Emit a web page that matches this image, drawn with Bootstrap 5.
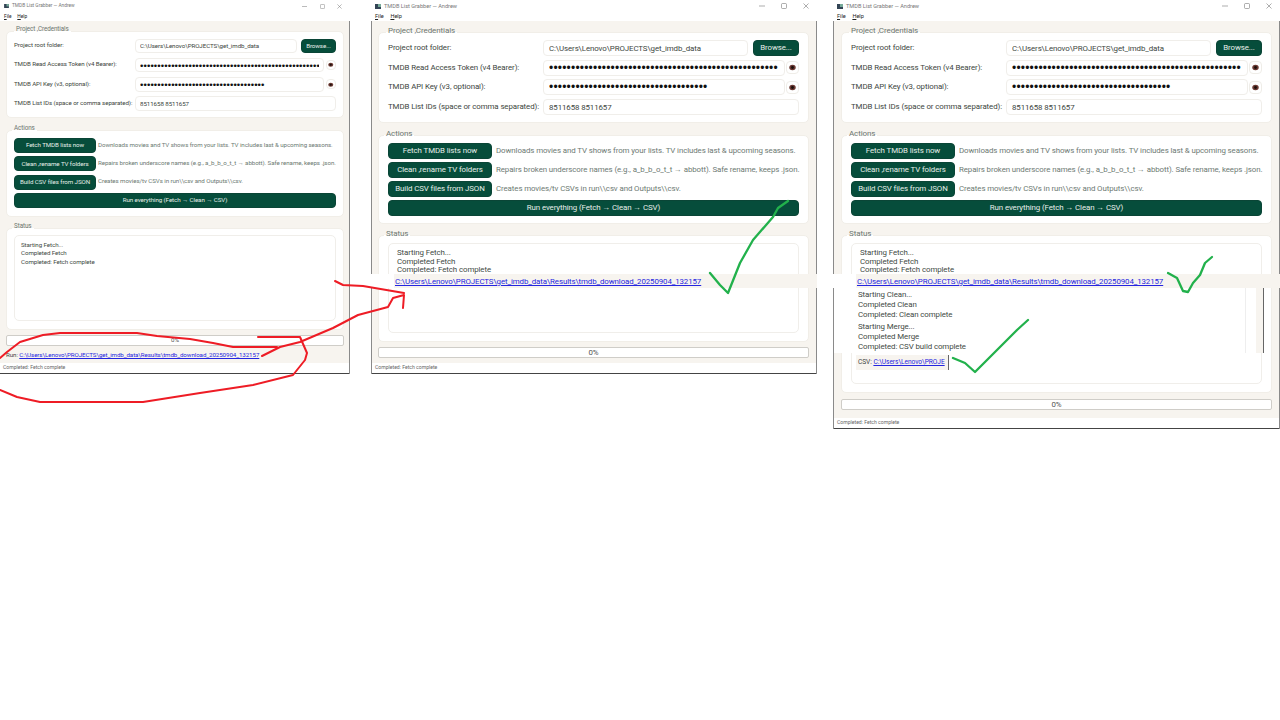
<!DOCTYPE html>
<html lang="en"><head><meta charset="utf-8"><title>TMDB List Grabber</title>
<link href="https://cdn.jsdelivr.net/npm/bootstrap@5.3.0/dist/css/bootstrap.min.css" rel="stylesheet">
<style>
html,body{margin:0;background:#fff;width:1280px;height:720px;overflow:hidden}
body{position:relative;font-family:Roboto,"Noto Sans",sans-serif;color:#3d4640}
.appwin{position:absolute;top:0;display:flex;flex-direction:column;background:#f7f4ef;box-shadow:inset -1px 0 #8a8a8a,inset 1px 0 #8a8a8a,inset 0 -1px #444}
.w1{left:0;width:350px;height:374px;box-shadow:inset -1px 0 #8a8a8a,inset 0 -1px #444;--fs:6.2px;--ls:-.08px;--lh:8.3px;--lab:121px;--ph:8px;--pv:7.5px;--rh:14.5px;--rg:4.8px;--brh:15px;--brg:3.3px;--bw:82px;--brw:35px;--bgap:4px;--ew:10px;--eg:2px;--ip:4px;--dot:9.6px;--dls:.1px;--tfs:4.8px;--cg:12.5px;--bl:6px;--br:6px;--lp:6px;--lg:2px;--esv:5.5px}
.w2{left:371px;width:446px;height:374px;--fs:7.9px;--ls:-.1px;--lh:8.6px;--lab:155px;--ph:10px;--pv:8px;--rh:16px;--rg:3.7px;--brh:16px;--brg:3px;--bw:104px;--brw:46px;--bgap:5px;--ew:13px;--eg:1px;--ip:5px;--dot:12px;--dls:.2px;--tfs:5.6px;--cg:16px;--bl:7px;--br:8px;--lp:8px;--lg:4px;--esv:7px}
.w3{left:833px;width:447px;height:429px;--fs:7.9px;--ls:-.1px;--lh:8.6px;--lab:155px;--ph:10px;--pv:8px;--rh:16px;--rg:3.7px;--brh:16px;--brg:3px;--bw:104px;--brw:46px;--bgap:5px;--ew:13px;--eg:1px;--ip:5px;--dot:12px;--dls:.2px;--tfs:5.6px;--cg:16px;--bl:8px;--br:8px;--lp:8px;--lg:4px;--esv:7px}
.ttl{height:12px;background:#fff;display:flex;align-items:center;padding:0 4px;font-size:var(--tfs);color:#777;gap:3px;flex:none}
.ttl-ctl{margin-left:auto;display:flex;gap:var(--cg);align-items:center;padding-right:4px}
.mbar{height:9px;background:#fff;display:flex;gap:calc(var(--tfs) + 1px);align-items:center;padding:0 4px;font-size:var(--tfs);color:#222;flex:none}
.mbar u{text-decoration-thickness:.5px}
.appbody{flex:1;display:flex;flex-direction:column;padding:0 var(--br) 0 var(--bl);font-size:var(--fs);letter-spacing:var(--ls);min-height:0}
.grp{background:#fff;border:1px solid #f1eee8;border-radius:5px;padding:calc(var(--pv) - 1px) calc(var(--ph) - 1px);position:relative}
.grp-t{position:absolute;left:5px;top:-7px;background:linear-gradient(#f7f4ef 70%,#fff 70%);padding:0 2px;line-height:9px;color:#6c7670;font-size:calc(var(--fs) + .1px)}
.g1 .grp-t{left:7px}
.g1{margin-top:11px}.g2{margin-top:12px}.g3{margin-top:11px;padding-bottom:8px}
.w1 .g1{margin-top:10px}.w1 .g2{margin-top:11.600px;padding-top:7px;padding-bottom:8px}.w1 .g3{padding-top:6px}
.frm{display:flex;flex-direction:column;gap:var(--rg)}
.frow{display:flex;align-items:center;height:var(--rh)}
.flab{width:var(--lab);flex:none;white-space:nowrap}
.fld{flex:1;min-width:0;width:auto;height:100%;min-height:0;padding:0 var(--ip);font-size:var(--fs);letter-spacing:var(--ls);line-height:1;color:#3d4640;background:#fff;border:1px solid #f0eeea;border-radius:4px;box-shadow:none}
.fld[type=password]{color:#111;letter-spacing:var(--dls);font-family:"Liberation Sans",sans-serif;font-size:var(--dot)}
.btn.bg{background:#064d3b;border:1px solid #0a4536;color:#e6eeea;border-radius:4px;font-size:var(--fs);letter-spacing:var(--ls);padding:0;height:var(--brh);line-height:1;display:flex;align-items:center;justify-content:center;white-space:nowrap}
.btn.bg.brw{width:var(--brw);margin-left:var(--bgap);flex:none;height:var(--rh)}
.eye{width:var(--ew);height:var(--ew);flex:none;margin-left:var(--eg);background:#fff;border:1px solid #efede8;border-radius:4px;display:flex;align-items:center;justify-content:center;padding:0}
.eye svg{width:var(--esv);height:var(--esv)}
.acts{display:flex;flex-direction:column;gap:var(--brg)}
.acts .bg.sm{width:var(--bw);flex:none}
.dsc{color:#6d7a73;white-space:nowrap;margin-left:var(--lg)}
.log{background:#fff;border:1px solid #f0eeea;border-radius:5px;padding:5.2px var(--lp);line-height:var(--lh);color:#414a44}
.w1 .log{height:86px}.w2 .log{height:90px}.w3 .log{height:141px}
.bar{height:11px;margin-top:5px;background:#fff;border:1px solid #cfcdc8;border-radius:2px;display:flex;align-items:center;justify-content:center;font-size:var(--fs);color:#555;flex:none}
.w3 .bar{margin-top:6px}
.runrow{margin-top:3px;line-height:12px;white-space:nowrap;color:#444}
a.lnk{color:#2525e0;text-decoration:underline}
.sbar{height:10px;flex:none;background:#fff;padding-left:3px;font-size:5.1px;line-height:9px;color:#666;margin:0 1px 1px}
.w1 .sbar{margin-left:0}
.strip{position:absolute;left:370px;width:910px;top:274px;height:14px;background:#fff}
.strip-in{position:absolute;top:0;height:14px;background:#f7f4ef;white-space:nowrap;font-size:7.9px;letter-spacing:-.1px;line-height:15px;padding-left:1px}
.s-a{left:24px;width:423px}
.s-b{left:486px;width:424px}
.patch{position:absolute;left:834px;top:288px;width:430px;height:65px;background:#fff;border-right:1px solid #666;font-size:7.9px;letter-spacing:-.1px;line-height:10.300px;color:#414a44;padding:1.500px 0 0 24px}
.patch::before{content:"";position:absolute;right:0;top:0;bottom:0;width:7px;background:#f7f4ef}
.patch::after{content:"";position:absolute;right:17px;top:0;bottom:0;width:1px;background:#eee}
.patch p{margin:0 0 1.500px}
.csvrow{position:absolute;left:856px;top:355px;width:93px;height:15px;overflow:hidden;background:#f7f4ef;font-size:6.6px;letter-spacing:-.05px;line-height:15px;padding-left:2px;white-space:nowrap;color:#444;border-right:1px solid #666}
.ink{position:absolute;left:0;top:0;width:1280px;height:720px;pointer-events:none}
.ink path{fill:none;stroke-linecap:round;stroke-linejoin:round}
.ink .r{stroke:#ee1c25;stroke-width:2}
.ink .g{stroke:#22b14c;stroke-width:2.3}
</style></head><body>

<div class="appwin w1">
 <div class="ttl"><svg width="5" height="4" viewBox="0 0 6 5"><rect width="6" height="5" fill="#345"/><rect x="3" width="3" height="3" fill="#7a9"/></svg>TMDB List Grabber — Andrew<div class="ttl-ctl"><svg width="5" height="5" viewBox="0 0 6 6"><path d="M0 3h6" stroke="#777" stroke-width=".6"/></svg><svg width="5" height="5" viewBox="0 0 6 6"><rect x=".5" y=".5" width="5" height="5" rx="1" fill="none" stroke="#777" stroke-width=".6"/></svg><svg width="5" height="5" viewBox="0 0 6 6"><path d="M.5 .5l5 5M5.500 .5l-5 5" stroke="#777" stroke-width=".6"/></svg></div></div>
 <div class="mbar"><span><u>F</u>ile</span><span><u>H</u>elp</span></div>
 <div class="appbody">
  <div class="grp g1"><div class="grp-t">Project ,Credentials</div>
   <div class="frm">
    <div class="frow"><div class="flab">Project root folder:</div><input class="form-control fld" value="C:\Users\Lenovo\PROJECTS\get_imdb_data" aria-label="Project root folder"><button class="btn bg brw">Browse...</button></div>
    <div class="frow"><div class="flab">TMDB Read Access Token (v4 Bearer):</div><input type="password" class="form-control fld" value="1234567890123456789012345678901234567890123456789012" aria-label="Token"><button class="eye" aria-label="Show"><svg viewBox="0 0 10 10"><ellipse cx="5" cy="5" rx="4.600" ry="3.800" fill="#6b3a33"/><circle cx="5" cy="5" r="2" fill="#1d0f0c"/></svg></button></div>
    <div class="frow"><div class="flab">TMDB API Key (v3, optional):</div><input type="password" class="form-control fld" value="123456789012345678901234567890123456" aria-label="API key"><button class="eye" aria-label="Show"><svg viewBox="0 0 10 10"><ellipse cx="5" cy="5" rx="4.600" ry="3.800" fill="#6b3a33"/><circle cx="5" cy="5" r="2" fill="#1d0f0c"/></svg></button></div>
    <div class="frow"><div class="flab">TMDB List IDs (space or comma separated):</div><input class="form-control fld" value="8511658 8511657" aria-label="List IDs"></div>
   </div></div>
  <div class="grp g2"><div class="grp-t">Actions</div>
   <div class="acts">
    <div class="d-flex align-items-center"><button class="btn bg sm">Fetch TMDB lists now</button><span class="dsc">Downloads movies and TV shows from your lists. TV includes last &amp; upcoming seasons.</span></div>
    <div class="d-flex align-items-center"><button class="btn bg sm">Clean ,rename TV folders</button><span class="dsc">Repairs broken underscore names (e.g., a_b_b_o_t_t → abbott). Safe rename, keeps .json.</span></div>
    <div class="d-flex align-items-center"><button class="btn bg sm">Build CSV files from JSON</button><span class="dsc">Creates movies/tv CSVs in run\\csv and Outputs\\csv.</span></div>
    <button class="btn bg w-100">Run everything (Fetch → Clean → CSV)</button>
   </div></div>
  <div class="grp g3"><div class="grp-t">Status</div>
   <div class="log">Starting Fetch...<br>Completed Fetch<br>Completed: Fetch complete</div></div>
  <div class="bar">0%</div>
  <div class="runrow">Run: <a class="lnk" href="#">C:\Users\Lenovo\PROJECTS\get_imdb_data\Results\tmdb_download_20250904_132157</a></div>
 </div>
 <div class="sbar">Completed: Fetch complete</div>
</div>

<div class="appwin w2">
 <div class="ttl"><svg width="6" height="5" viewBox="0 0 6 5"><rect width="6" height="5" fill="#345"/><rect x="3" width="3" height="3" fill="#7a9"/></svg>TMDB List Grabber — Andrew<div class="ttl-ctl"><svg width="6" height="6" viewBox="0 0 6 6"><path d="M0 3h6" stroke="#777" stroke-width=".6"/></svg><svg width="6" height="6" viewBox="0 0 6 6"><rect x=".5" y=".5" width="5" height="5" rx="1" fill="none" stroke="#777" stroke-width=".6"/></svg><svg width="6" height="6" viewBox="0 0 6 6"><path d="M.5 .5l5 5M5.500 .5l-5 5" stroke="#777" stroke-width=".6"/></svg></div></div>
 <div class="mbar"><span><u>F</u>ile</span><span><u>H</u>elp</span></div>
 <div class="appbody">
  <div class="grp g1"><div class="grp-t">Project ,Credentials</div>
   <div class="frm">
    <div class="frow"><div class="flab">Project root folder:</div><input class="form-control fld" value="C:\Users\Lenovo\PROJECTS\get_imdb_data" aria-label="Project root folder"><button class="btn bg brw">Browse...</button></div>
    <div class="frow"><div class="flab">TMDB Read Access Token (v4 Bearer):</div><input type="password" class="form-control fld" value="1234567890123456789012345678901234567890123456789012" aria-label="Token"><button class="eye" aria-label="Show"><svg viewBox="0 0 10 10"><ellipse cx="5" cy="5" rx="4.600" ry="3.800" fill="#6b3a33"/><circle cx="5" cy="5" r="2" fill="#1d0f0c"/></svg></button></div>
    <div class="frow"><div class="flab">TMDB API Key (v3, optional):</div><input type="password" class="form-control fld" value="123456789012345678901234567890123456" aria-label="API key"><button class="eye" aria-label="Show"><svg viewBox="0 0 10 10"><ellipse cx="5" cy="5" rx="4.600" ry="3.800" fill="#6b3a33"/><circle cx="5" cy="5" r="2" fill="#1d0f0c"/></svg></button></div>
    <div class="frow"><div class="flab">TMDB List IDs (space or comma separated):</div><input class="form-control fld" value="8511658 8511657" aria-label="List IDs"></div>
   </div></div>
  <div class="grp g2"><div class="grp-t">Actions</div>
   <div class="acts">
    <div class="d-flex align-items-center"><button class="btn bg sm">Fetch TMDB lists now</button><span class="dsc">Downloads movies and TV shows from your lists. TV includes last &amp; upcoming seasons.</span></div>
    <div class="d-flex align-items-center"><button class="btn bg sm">Clean ,rename TV folders</button><span class="dsc">Repairs broken underscore names (e.g., a_b_b_o_t_t → abbott). Safe rename, keeps .json.</span></div>
    <div class="d-flex align-items-center"><button class="btn bg sm">Build CSV files from JSON</button><span class="dsc">Creates movies/tv CSVs in run\\csv and Outputs\\csv.</span></div>
    <button class="btn bg w-100">Run everything (Fetch → Clean → CSV)</button>
   </div></div>
  <div class="grp g3"><div class="grp-t">Status</div>
   <div class="log">Starting Fetch...<br>Completed Fetch<br>Completed: Fetch complete</div></div>
  <div class="bar">0%</div>
 </div>
 <div class="sbar">Completed: Fetch complete</div>
</div>

<div class="appwin w3">
 <div class="ttl"><svg width="6" height="5" viewBox="0 0 6 5"><rect width="6" height="5" fill="#345"/><rect x="3" width="3" height="3" fill="#7a9"/></svg>TMDB List Grabber — Andrew<div class="ttl-ctl"><svg width="6" height="6" viewBox="0 0 6 6"><path d="M0 3h6" stroke="#777" stroke-width=".6"/></svg><svg width="6" height="6" viewBox="0 0 6 6"><rect x=".5" y=".5" width="5" height="5" rx="1" fill="none" stroke="#777" stroke-width=".6"/></svg><svg width="6" height="6" viewBox="0 0 6 6"><path d="M.5 .5l5 5M5.500 .5l-5 5" stroke="#777" stroke-width=".6"/></svg></div></div>
 <div class="mbar"><span><u>F</u>ile</span><span><u>H</u>elp</span></div>
 <div class="appbody">
  <div class="grp g1"><div class="grp-t">Project ,Credentials</div>
   <div class="frm">
    <div class="frow"><div class="flab">Project root folder:</div><input class="form-control fld" value="C:\Users\Lenovo\PROJECTS\get_imdb_data" aria-label="Project root folder"><button class="btn bg brw">Browse...</button></div>
    <div class="frow"><div class="flab">TMDB Read Access Token (v4 Bearer):</div><input type="password" class="form-control fld" value="1234567890123456789012345678901234567890123456789012" aria-label="Token"><button class="eye" aria-label="Show"><svg viewBox="0 0 10 10"><ellipse cx="5" cy="5" rx="4.600" ry="3.800" fill="#6b3a33"/><circle cx="5" cy="5" r="2" fill="#1d0f0c"/></svg></button></div>
    <div class="frow"><div class="flab">TMDB API Key (v3, optional):</div><input type="password" class="form-control fld" value="123456789012345678901234567890123456" aria-label="API key"><button class="eye" aria-label="Show"><svg viewBox="0 0 10 10"><ellipse cx="5" cy="5" rx="4.600" ry="3.800" fill="#6b3a33"/><circle cx="5" cy="5" r="2" fill="#1d0f0c"/></svg></button></div>
    <div class="frow"><div class="flab">TMDB List IDs (space or comma separated):</div><input class="form-control fld" value="8511658 8511657" aria-label="List IDs"></div>
   </div></div>
  <div class="grp g2"><div class="grp-t">Actions</div>
   <div class="acts">
    <div class="d-flex align-items-center"><button class="btn bg sm">Fetch TMDB lists now</button><span class="dsc">Downloads movies and TV shows from your lists. TV includes last &amp; upcoming seasons.</span></div>
    <div class="d-flex align-items-center"><button class="btn bg sm">Clean ,rename TV folders</button><span class="dsc">Repairs broken underscore names (e.g., a_b_b_o_t_t → abbott). Safe rename, keeps .json.</span></div>
    <div class="d-flex align-items-center"><button class="btn bg sm">Build CSV files from JSON</button><span class="dsc">Creates movies/tv CSVs in run\\csv and Outputs\\csv.</span></div>
    <button class="btn bg w-100">Run everything (Fetch → Clean → CSV)</button>
   </div></div>
  <div class="grp g3"><div class="grp-t">Status</div>
   <div class="log">Starting Fetch...<br>Completed Fetch<br>Completed: Fetch complete</div></div>
  <div class="bar">0%</div>
 </div>
 <div class="sbar">Completed: Fetch complete</div>
</div>

<div class="strip"><div class="strip-in s-a"><a class="lnk" href="#">C:\Users\Lenovo\PROJECTS\get_imdb_data\Results\tmdb_download_20250904_132157</a></div><div class="strip-in s-b"><a class="lnk" href="#">C:\Users\Lenovo\PROJECTS\get_imdb_data\Results\tmdb_download_20250904_132157</a></div></div>
<div class="patch"><p>Starting Clean...<br>Completed Clean<br>Completed: Clean complete</p><p>Starting Merge...<br>Completed Merge<br>Completed: CSV build complete</p></div>
<div class="csvrow">CSV: <a class="lnk" href="#">C:\Users\Lenovo\PROJE</a></div>

<svg class="ink" viewBox="0 0 1280 720" aria-hidden="true">
 <path class="r" d="M258 337L300 337L307 353L305 360L293 375L253 385L200 393L143 402L40 402L17 397L0 390"/>
 <path class="r" d="M0 358L7 352L20 342L43 335L60 333L137 333L157 336L190 339L213 343L233 347L277 347"/>
 <path class="r" d="M262 356L280 347L300 342L333 328L358 315L388 307L393 298L404 295L403 308"/>
 <path class="r" d="M335 281L343 285L363 286L404 293"/>
 <path class="g" d="M788 201L778 208L773 217L753 240L740 263L728 293L720 285L710 273"/>
 <path class="g" d="M1212 257L1205 263L1200 275L1193 283L1188 292L1183 291L1177 278L1168 273"/>
 <path class="g" d="M1028 320L1017 330L990 357L975 372L965 363L953 358"/>
</svg>
<script src="https://cdn.jsdelivr.net/npm/bootstrap@5.3.0/dist/js/bootstrap.bundle.min.js"></script>
</body></html>
